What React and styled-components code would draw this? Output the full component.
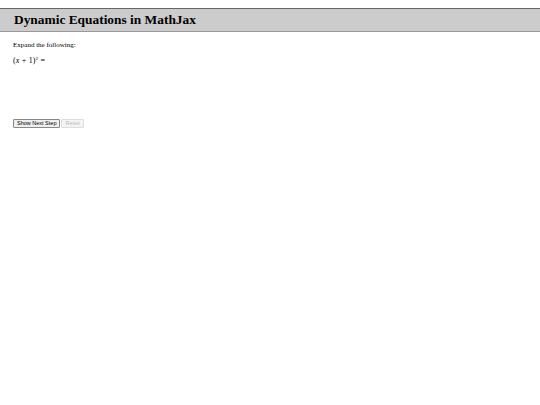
import React, { useState } from 'react';
import styled, { createGlobalStyle } from 'styled-components';

const GlobalStyle = createGlobalStyle`
	html, body {
		margin: 0;
		padding: 0;
		background: #ffffff;
	}
	body {
		font-family: 'Liberation Serif', 'Times New Roman', serif;
		color: #000000;
	}
`;

const Page = styled.div`
	padding-top: 8px;
`;

const Header = styled.h1`
	margin: 0;
	height: 22px;
	padding: 0 14px;
	display: flex;
	align-items: center;
	background-color: #cccccc;
	border-top: 1px solid #666666;
	border-bottom: 1px solid #999999;
	font-size: 13.4px;
	font-weight: bold;
`;

const Content = styled.div`
	padding: 9px 13px 0;
`;

const Prompt = styled.p`
	margin: 0 0 7px;
	font-size: 7px;
`;

const Equation = styled.div`
	height: 63px;
	font-size: 8px;
`;

const Var = styled.i`
	font-style: italic;
`;

const Sup = styled.sup`
	font-size: 5px;
	vertical-align: 3px;
	line-height: 0;
`;

const Op = styled.span`
	margin: 0 2.5px;
`;

const Buttons = styled.div`
	display: flex;
	gap: 1px;
`;

const Button = styled.button`
	font-family: 'Liberation Sans', Arial, sans-serif;
	font-size: 5.5px;
	height: 9px;
	padding: 0 3px;
	border: 1px solid ${(props) => (props.disabled ? '#dddddd' : '#888888')};
	border-radius: 1px;
	background-color: ${(props) => (props.disabled ? '#f4f4f4' : '#efefef')};
	color: ${(props) => (props.disabled ? '#bbbbbb' : '#000000')};
	line-height: 1;
`;

function App() {
	const [step, setStep] = useState(0);

	return (
		<Page>
			<GlobalStyle />
			<Header>Dynamic Equations in MathJax</Header>
			<Content>
				<Prompt>Expand the following:</Prompt>
				<Equation>
					(<Var>x</Var>
					<Op>+</Op>1)<Sup>2</Sup>
					<Op>=</Op>
				</Equation>
				<Buttons>
					<Button onClick={() => setStep(step + 1)}>Show Next Step</Button>
					<Button disabled={step === 0} onClick={() => setStep(0)}>
						Reset
					</Button>
				</Buttons>
			</Content>
		</Page>
	);
}

export default App;
